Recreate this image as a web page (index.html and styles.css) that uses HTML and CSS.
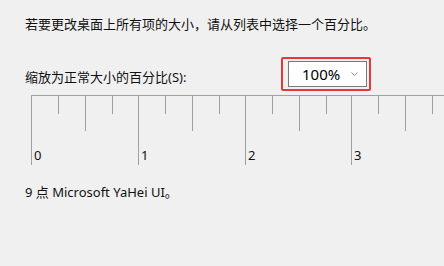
FILE: index.html
```html
<!DOCTYPE html>
<html lang="zh-CN">
<head>
  <meta charset="UTF-8" />
  <meta name="viewport" content="width=device-width, initial-scale=1.0"/>
  <title>缩放比例</title>
  <link rel="stylesheet" href="styles.css">
</head>
<body>

<p class="intro">若要更改桌面上所有项的大小，请从列表中选择一个百分比。</p>

<div class="scale-row">
  <label class="scale-label">缩放为正常大小的百分比(S):</label>
  <div class="highlight">
    <div class="combo">
      <span class="combo-value">100%</span>
      <svg class="chevron" width="7" height="4" viewBox="0 0 7 4">
        <polyline points="0.5,0.5 3.5,3.5 6.5,0.5" fill="none" stroke="#8a8a8a" stroke-width="1"/>
      </svg>
    </div>
  </div>
</div>

<!-- ruler: one unit per inch -->
<div class="ruler">
  <div class="unit"><span>0</span></div>
  <div class="unit"><span>1</span></div>
  <div class="unit"><span>2</span></div>
  <div class="unit"><span>3</span></div>
</div>

<p class="font-note">9 点 Microsoft YaHei UI。</p>

</body>
</html>
```

FILE: styles.css
```css
html, body {
  height: 100%;
}
body {
  margin: 0;
  padding-left: 25px;
  background: #f0f0f0;
  color: #111;
  font-family: "Noto Sans", "Noto Sans CJK SC", sans-serif;
  font-size: 13px;
  overflow: hidden;
}
.intro {
  margin: 0;
  padding-top: 15px;
  line-height: 19px;
}
.scale-row {
  display: flex;
  align-items: flex-start;
  margin-top: 23px;
}
.scale-label {
  width: 256px;
  margin-top: 11px;
  line-height: 19px;
}
.highlight {
  box-sizing: border-box;
  width: 90px;
  height: 34px;
  padding: 2px 2px 2px 5px;
  border: 2px solid #e23a3a;
  border-radius: 2px;
}
.combo {
  box-sizing: border-box;
  display: flex;
  align-items: center;
  height: 26px;
  border: 1px solid #7a7a7a;
  background: #fff;
}
.combo-value {
  padding-left: 13px;
  font-size: 15px;
  color: #000;
}
.chevron {
  margin-left: auto;
  margin-right: 8px;
}
.ruler {
  display: flex;
  margin: 4px 0 0 6px;
  border-top: 1px solid #a0a0a0;
}
.unit {
  box-sizing: border-box;
  flex: none;
  display: flex;
  align-items: flex-end;
  width: 107px;
  height: 69px;
  padding: 0 0 2px 2px;
  border-left: 1px solid #a0a0a0;
  background:
    linear-gradient(#a0a0a0, #a0a0a0) 26px 0 / 1px 18px no-repeat,
    linear-gradient(#a0a0a0, #a0a0a0) 53px 0 / 1px 35px no-repeat,
    linear-gradient(#a0a0a0, #a0a0a0) 80px 0 / 1px 18px no-repeat;
  line-height: 15px;
  font-size: 13px;
}
.unit:nth-child(3) {
  width: 106px;
}
.font-note {
  margin: 18px 0 0;
  line-height: 19px;
}
```
